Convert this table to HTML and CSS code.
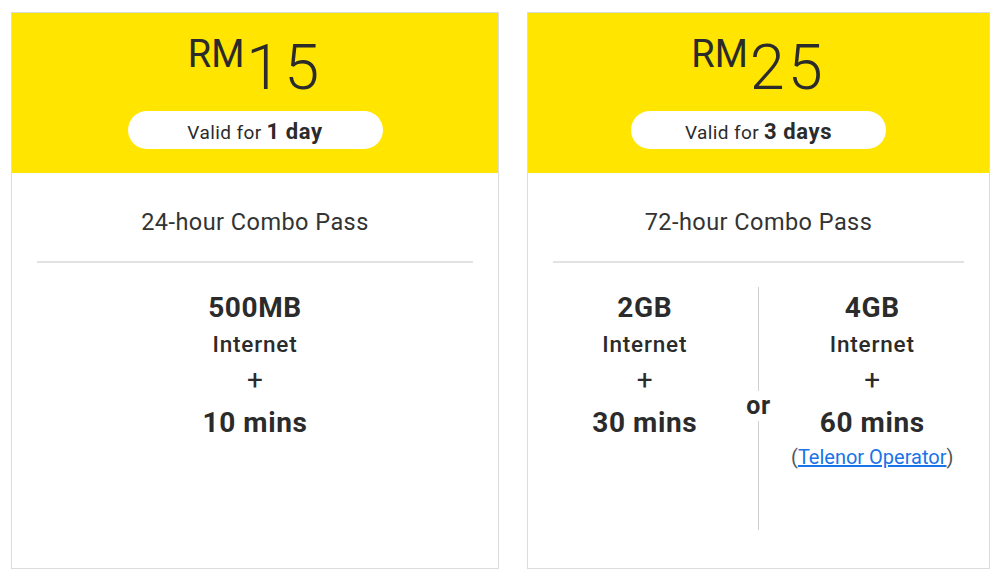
FILE: index.html
```html
<!DOCTYPE html>
<html>
<head>
<meta charset="utf-8">
<link rel="stylesheet" href="styles.css">
</head>
<body>
<div class="row">
  <div class="card card-a">
    <div class="head">
      <div class="price"><span class="cur">RM</span><span class="amt">15</span></div>
      <div class="pill"><span class="vf">Valid for</span> <b>1 day</b></div>
    </div>
    <div class="body">
      <div class="title">24-hour Combo Pass</div>
      <div class="rule"></div>
      <div class="feat single">
        <div class="big">500MB</div>
        <div class="mid">Internet</div>
        <div class="plus">+</div>
        <div class="big mins">10 mins</div>
      </div>
    </div>
  </div>
  <div class="card card-b">
    <div class="head">
      <div class="price"><span class="cur">RM</span><span class="amt">25</span></div>
      <div class="pill"><span class="vf">Valid for</span> <b>3 days</b></div>
    </div>
    <div class="body">
      <div class="title">72-hour Combo Pass</div>
      <div class="rule"></div>
      <div class="split">
        <div class="feat">
          <div class="big">2GB</div>
          <div class="mid">Internet</div>
          <div class="plus">+</div>
          <div class="big mins">30 mins</div>
        </div>
        <div class="or-col">
          <div class="seg seg-top"></div>
          <div class="or">or</div>
          <div class="seg seg-bot"></div>
        </div>
        <div class="feat">
          <div class="big">4GB</div>
          <div class="mid">Internet</div>
          <div class="plus">+</div>
          <div class="big mins">60 mins</div>
          <div class="note">(<a href="#">Telenor Operator</a>)</div>
        </div>
      </div>
    </div>
  </div>
</div>
</body>
</html>
```

FILE: styles.css
```css
* { box-sizing: border-box; }
html, body { margin: 0; padding: 0; background: #fff; }
body {
  font-family: Roboto, "Liberation Sans", sans-serif;
  color: #333;
}
.row {
  display: flex;
  gap: 28px;
  padding: 12px 0 0 11px;
}
.card {
  border: 1px solid #dcdcdc;
  height: 557px;
  display: flex;
  flex-direction: column;
}
.card-a { width: 488px; }
.card-b { width: 463px; }
.head {
  background: #ffe500;
  height: 160px;
  display: flex;
  flex-direction: column;
  align-items: center;
  padding-top: 24px;
}
.price {
  display: flex;
  align-items: flex-start;
  height: 62px;
  line-height: 62px;
  color: #2b2b2b;
}
.cur {
  font-size: 38px;
  font-weight: 400;
  line-height: 37px;
  margin-top: -1px;
  margin-right: 2px;
}
.amt {
  font-size: 63px;
  font-weight: 300;
  letter-spacing: 3px;
}
.pill {
  margin-top: 12px;
  width: 255px;
  height: 38px;
  border-radius: 19px;
  background: #fff;
  display: flex;
  align-items: center;
  justify-content: center;
  gap: 5px;
  padding-top: 3px;
  color: #2b2b2b;
}
.vf { font-size: 19px; letter-spacing: 0.4px; padding-top: 2px; }
.pill b { font-size: 22px; font-weight: 700; letter-spacing: 0.6px; }
.body {
  flex: 1;
  padding: 34px 25px 0;
  background: #fff;
}
.title {
  text-align: center;
  font-size: 23.5px;
  line-height: 30px;
  letter-spacing: 0.45px;
  color: #333;
}
.rule {
  margin-top: 24px;
  height: 2px;
  background: #e2e2e2;
}
.feat {
  text-align: center;
}
.feat.single { padding-top: 27px; }
.big {
  font-size: 28px;
  font-weight: 700;
  line-height: 36px;
  letter-spacing: 0.6px;
  color: #2b2b2b;
}
.mid {
  font-size: 22.5px;
  font-weight: 500;
  line-height: 36px;
  letter-spacing: 0.8px;
  color: #2b2b2b;
}
.plus {
  font-size: 28px;
  font-weight: 400;
  line-height: 36px;
  color: #2b2b2b;
}
.mins { margin-top: 7px; }
.split {
  margin-top: 24px;
  height: 243px;
  display: grid;
  grid-template-columns: 1fr 44px 1fr;
}
.split .feat { padding-top: 3px; }
.or-col {
  display: flex;
  flex-direction: column;
  align-items: center;
}
.seg { width: 1px; background: #cfcfcf; }
.seg-top { flex: 104; }
.seg-bot { flex: 109; }
.or {
  font-size: 25px;
  font-weight: 700;
  line-height: 30px;
  letter-spacing: 0.5px;
  color: #2b2b2b;
}
.note {
  font-size: 20px;
  line-height: 28px;
  color: #555;
  margin-top: 2px;
}
.note a {
  color: #1a73e8;
  text-decoration: underline;
}
```
